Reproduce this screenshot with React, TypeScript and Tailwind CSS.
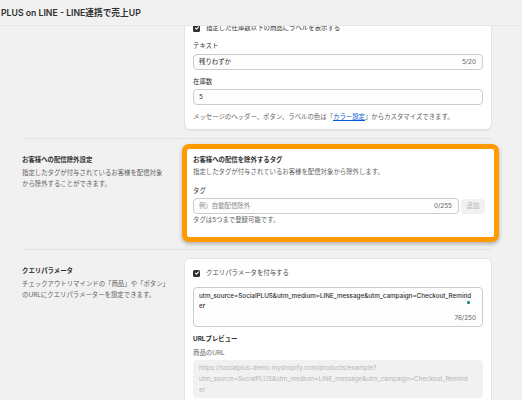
import React from 'react';

const UTM = 'utm_source=SocialPLUS&utm_medium=LINE_message&utm_campaign=Checkout_Remind';

function CheckBox() {
  return (
    <span className="w-[7px] h-[7px] rounded-[1.5px] bg-[#303030] flex items-center justify-center shrink-0">
      <svg width={6} height={6} viewBox="0 0 10 10" fill="none" stroke="#fff" strokeWidth={1.8} strokeLinecap="round" strokeLinejoin="round">
        <polyline points="2.6 5.2 4.3 6.9 7.5 3.3" />
      </svg>
    </span>
  );
}

function Field({ value, count, placeholder }: { value?: string; count?: string; placeholder?: boolean }) {
  return (
    <div className="h-[16px] border border-[#cccccc] rounded-[4px] bg-[#fdfdfd] pl-[5px] pr-[6px] flex items-center justify-between">
      <span className={placeholder ? 'text-[#8a8a8a]' : 'text-[#303030]'}>{value}</span>
      {count && <span className="text-[#616161]">{count}</span>}
    </div>
  );
}

export default function App() {
  return (
    <div className="w-[522px] h-[400px] overflow-hidden bg-[#f1f1f1] flex flex-col font-['Inter','Noto_Sans_CJK_JP',sans-serif] text-[6.4px] leading-[10px] text-[#303030]">
      {/* Header */}
      <div className="h-[26px] shrink-0 flex items-center pl-[1px] border-b border-[#e6e6e6] text-[8.7px] font-semibold text-[#303030]">
        PLUS on LINE - LINE連携で売上UP
      </div>

      <div className="flex-1 overflow-hidden">
        <div className="-mt-[11px] ml-[22px] w-[470px]">
          {/* Section: label */}
          <div className="flex border-b border-[#e3e3e3]">
            <div className="w-[162px] shrink-0" />
            <div className="w-[308px] pb-[8px]">
              <div className="bg-white border border-[#e3e3e3] rounded-[6px] px-[8px] pt-[7px] pb-[7px] shadow-[0_1px_0_rgba(0,0,0,0.05)]">
                <div className="flex items-center h-[10px]">
                  <CheckBox />
                  <span className="ml-[6px]">指定した在庫数以下の商品にラベルを表示する</span>
                </div>
                <div className="mt-[8px]">テキスト</div>
                <div className="mt-[3px]"><Field value="残りわずか" count="5/20" /></div>
                <div className="mt-[7px]">在庫数</div>
                <div className="mt-[2px]"><Field value="5" /></div>
                <div className="mt-[7px] text-[#616161]">
                  メッセージのヘッダー、ボタン、ラベルの色は「<span className="text-[#005bd3] underline">カラー設定</span>」からカスタマイズできます。
                </div>
              </div>
            </div>
          </div>

          {/* Section: exclude */}
          <div className="flex border-b border-[#e3e3e3]">
            <div className="w-[162px] shrink-0 pt-[16px]">
              <div className="font-bold">お客様への配信除外設定</div>
              <div className="mt-[3px] leading-[11px] text-[#616161] whitespace-nowrap">
                指定したタグが付与されているお客様を配信対象<br />から除外することができます。
              </div>
            </div>
            <div className="w-[308px] pt-[5px] pb-[7px]">
              <div className="-ml-[2px] w-[317px] bg-white border-[5px] border-[#ff9a00] rounded-[7px] pl-[6px] pr-[9px] pt-[6px] pb-[12px] shadow-[0_2px_4px_rgba(0,0,0,0.28)]">
                <div className="font-bold">お客様への配信を除外するタグ</div>
                <div className="mt-[2px] text-[#616161]">指定したタグが付与されているお客様を配信対象から除外します。</div>
                <div className="mt-[9px]">タグ</div>
                <div className="mt-[2px] flex gap-[2px]">
                  <div className="flex-1"><Field value="例）自動配信除外" count="0/255" placeholder /></div>
                  <div className="w-[24px] h-[15px] mt-[0.5px] rounded-[4px] bg-[#f1f1f1] text-[#b5b5b5] flex items-center justify-center">追加</div>
                </div>
                <div className="mt-[1px] text-[#616161]">タグは5つまで登録可能です。</div>
              </div>
            </div>
          </div>

          {/* Section: query params */}
          <div className="flex">
            <div className="w-[162px] shrink-0 pt-[16px]">
              <div className="font-bold">クエリパラメータ</div>
              <div className="mt-[3px] leading-[11px] text-[#616161] whitespace-nowrap">
                チェックアウトリマインドの「商品」や「ボタン」<br />のURLにクエリパラメーターを設定できます。
              </div>
            </div>
            <div className="w-[308px] pt-[8px]">
              <div className="bg-white border border-[#e3e3e3] rounded-[6px] px-[8px] pt-[9px] pb-[10px]">
                <div className="flex items-center h-[10px]">
                  <CheckBox />
                  <span className="ml-[6px] text-[#4a4a4a]">クエリパラメータを付与する</span>
                </div>
                <div className="relative mt-[9px] h-[40px] border border-[#cccccc] rounded-[4px] bg-[#fdfdfd] pl-[5px] pr-[6px] pt-[3px]">
                  <div className="font-medium whitespace-nowrap text-[6.3px]">
                    {UTM}<br />er
                  </div>
                  <div className="mt-[2px] text-right text-[#616161]">76/250</div>
                  <span className="absolute right-[12px] top-[13px] w-[3px] h-[3px] rounded-full bg-[#00806a]" />
                </div>
                <div className="mt-[7px] font-bold">URLプレビュー</div>
                <div className="mt-[4px] text-[#616161]">商品のURL</div>
                <div className="mt-[2px] rounded-[4px] bg-[#f1f1f1] pl-[6px] pt-[3px] pb-[2px] leading-[11px] text-[6.3px] text-[#b5b5b5] whitespace-nowrap">
                  https://socialplus-demo.myshopify.com/products/example?<br />
                  {UTM}<br />er
                </div>
              </div>
            </div>
          </div>
        </div>
      </div>
    </div>
  );
}
